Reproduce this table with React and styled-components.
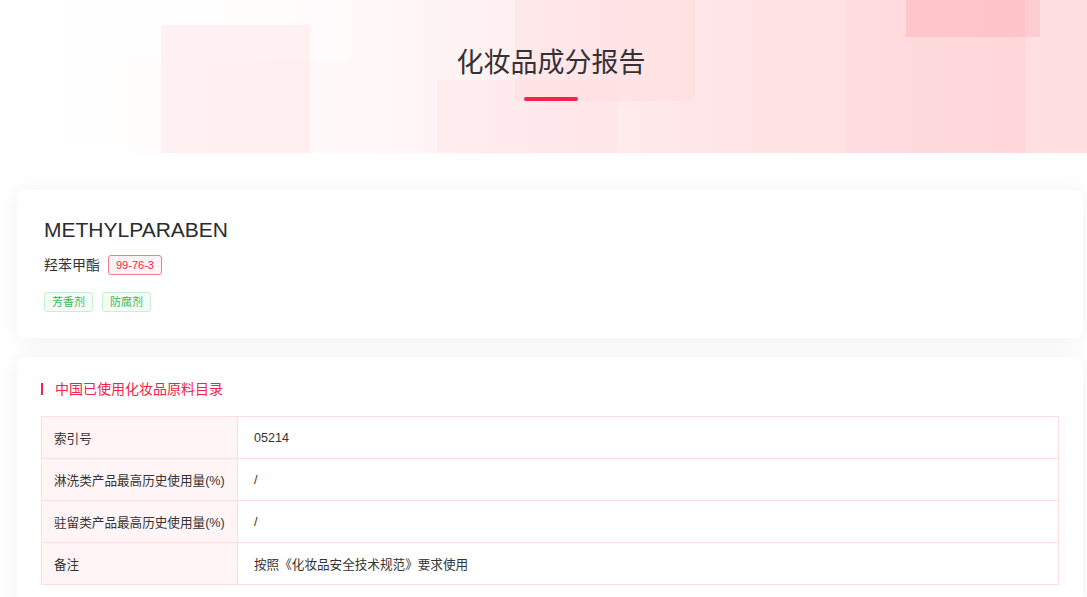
import React from 'react'
import styled, { createGlobalStyle } from 'styled-components'

const GlobalStyle = createGlobalStyle`
  html, body {
    margin: 0;
    padding: 0;
    background: #fff;
    scrollbar-width: none;
  }
  html::-webkit-scrollbar { display: none; }
  body {
    font-family: "Liberation Sans", "Noto Sans CJK SC", Arial, sans-serif;
    color: #333;
  }
  * { box-sizing: border-box; }
`

const Banner = styled.header`
  position: relative;
  height: 153px;
  padding-left: 15px;
  overflow: hidden;
  background: linear-gradient(90deg, #fff 0%, #fff7f8 35%, #ffe6e8 65%, #ffd9dc 100%);
  display: flex;
  flex-direction: column;
  align-items: center;
`

const Decor = styled.div`
  position: absolute;
  left: ${p => p.x}px;
  top: ${p => p.y}px;
  width: ${p => p.w}px;
  height: ${p => p.h}px;
  background: ${p => p.bg};
`

const BannerTitle = styled.h1`
  position: relative;
  margin: 44px 0 0;
  font-size: 27px;
  line-height: 38px;
  font-weight: 400;
  color: #333;
`

const TitleBar = styled.span`
  position: relative;
  display: block;
  width: 54px;
  height: 4px;
  margin-top: 15px;
  border-radius: 2px;
  background: #f5234a;
`

const Main = styled.main`
  padding: 37px 4px 0 17px;
  display: flex;
  flex-direction: column;
  gap: 19px;
`

const Card = styled.section`
  background: #fff;
  border-radius: 8px;
  box-shadow: 0 2px 24px rgba(0, 0, 0, 0.06);
  padding: ${p => p.pad};
`

const EnName = styled.div`
  font-size: 21px;
  line-height: 25px;
  color: #2b2b2b;
`

const NameRow = styled.div`
  display: flex;
  align-items: center;
  gap: 8px;
  margin-top: 13px;
  font-size: 14px;
  line-height: 20px;
`

const Cas = styled.span`
  display: inline-block;
  height: 20px;
  padding: 0 7px;
  border: 1px solid #f77b8f;
  border-radius: 3px;
  background: #fff3f5;
  color: #f5234a;
  font-size: 11px;
  line-height: 18px;
`

const TagRow = styled.div`
  display: flex;
  gap: 9px;
  margin-top: 17px;
`

const Tag = styled.span`
  display: inline-block;
  height: 20px;
  padding: 0 7px;
  border: 1px solid #c9efd3;
  border-radius: 3px;
  background: #f3fcf5;
  color: #3cb95a;
  font-size: 11px;
  line-height: 18px;
`

const SectionTitle = styled.h2`
  display: flex;
  align-items: center;
  gap: 12px;
  margin: 0;
  font-size: 14px;
  line-height: 20px;
  font-weight: 400;
  color: #f5234a;

  &::before {
    content: '';
    width: 2px;
    height: 12px;
    background: #f5234a;
  }
`

const Table = styled.table`
  width: 100%;
  margin-top: 17px;
  border-collapse: collapse;
  table-layout: fixed;
  font-size: 12.6px;
  color: #333;
`

const Cell = styled.td`
  height: 42px;
  padding: 0 ${p => (p.head ? 12 : 16)}px;
  border: 1px solid #fddde1;
  background: ${p => (p.head ? '#fff5f6' : '#fff')};
  width: ${p => (p.head ? '196px' : 'auto')};
  white-space: nowrap;
  vertical-align: middle;
`

const rows = [
  ['索引号', '05214'],
  ['淋洗类产品最高历史使用量(%)', '/'],
  ['驻留类产品最高历史使用量(%)', '/'],
  ['备注', '按照《化妆品安全技术规范》要求使用'],
]

const decor = [
  { x: 110, y: 0, w: 240, h: 62, bg: 'rgba(255,255,255,0.45)' },
  { x: 161, y: 25, w: 149, h: 128, bg: 'rgba(255,200,205,0.22)' },
  { x: 437, y: 80, w: 180, h: 73, bg: 'rgba(255,200,205,0.15)' },
  { x: 515, y: 0, w: 180, h: 101, bg: 'rgba(255,200,205,0.18)' },
  { x: 846, y: 0, w: 180, h: 153, bg: 'rgba(255,190,196,0.12)' },
  { x: 906, y: 0, w: 134, h: 37, bg: 'rgba(253,180,188,0.55)' },
  { x: 1025, y: 0, w: 62, h: 153, bg: 'rgba(255,255,255,0.12)' },
]

export default function App() {
  return (
    <>
      <GlobalStyle />
      <Banner>
        {decor.map((d, i) => (
          <Decor key={i} {...d} />
        ))}
        <BannerTitle>化妆品成分报告</BannerTitle>
        <TitleBar />
      </Banner>
      <Main>
        <Card pad="27px 27px 26px">
          <EnName>METHYLPARABEN</EnName>
          <NameRow>
            羟苯甲酯
            <Cas>99-76-3</Cas>
          </NameRow>
          <TagRow>
            <Tag>芳香剂</Tag>
            <Tag>防腐剂</Tag>
          </TagRow>
        </Card>
        <Card pad="22px 24px 24px">
          <SectionTitle>中国已使用化妆品原料目录</SectionTitle>
          <Table>
            <tbody>
              {rows.map(([k, v]) => (
                <tr key={k}>
                  <Cell head>{k}</Cell>
                  <Cell>{v}</Cell>
                </tr>
              ))}
            </tbody>
          </Table>
        </Card>
      </Main>
    </>
  )
}
